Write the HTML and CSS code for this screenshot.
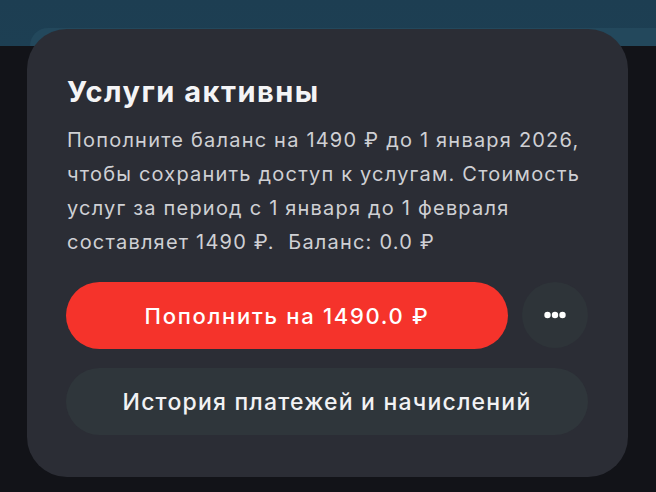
FILE: index.html
```html
<!DOCTYPE html>
<html lang="ru">
<head>
<meta charset="utf-8">
<title>Услуги активны</title>
<link rel="stylesheet" href="styles.css">
</head>
<body>
  <div class="backdrop">
    <div class="peek"></div>
  </div>
  <section class="sheet">
    <h1 class="sheet-title">Услуги активны</h1>
    <p class="sheet-text">Пополните баланс на 1490 ₽ до 1 января 2026,<br>чтобы сохранить доступ к услугам. Стоимость<br>услуг за период с 1 января до 1 февраля<br>составляет 1490 ₽.&nbsp; Баланс: 0.0 ₽</p>
    <div class="actions">
      <button class="btn btn-primary" type="button">Пополнить на 1490.0 ₽</button>
      <button class="btn-more" type="button" aria-label="Ещё">
        <svg width="22" height="8" viewBox="0 0 22 8"><circle cx="3.5" cy="4" r="3.2" fill="#fff"/><circle cx="11" cy="4" r="3.2" fill="#fff"/><circle cx="18.5" cy="4" r="3.2" fill="#fff"/></svg>
      </button>
    </div>
    <button class="btn btn-secondary" type="button">История платежей и начислений</button>
  </section>
</body>
</html>
```

FILE: styles.css
```css
* { box-sizing: border-box; }

html, body {
  margin: 0;
  height: 100%;
}

body {
  background: linear-gradient(to bottom, #1d3e52 0, #1d3f53 46px, #121318 46px);
  font-family: Inter, "Noto Sans", sans-serif;
  overflow: hidden;
}

/* page header behind the sheet */
.backdrop {
  height: 46px;
  padding-top: 28px;
  padding-left: 30px;
}

.peek {
  height: 18px;
  background: #23485c;
  border-top-left-radius: 30px;
}

.sheet {
  margin: -17px 0 0 27px;
  width: 601px;
  height: 448px;
  background: #2b2d35;
  border-radius: 40px;
  padding: 46px 40px 42px 39px;
  display: flex;
  flex-direction: column;
}

.sheet-title {
  margin: 0;
  font-size: 29px;
  line-height: 34px;
  font-weight: 700;
  color: #f4f4f6;
  letter-spacing: 1.5px;
  padding-left: 1px;
}

.sheet-text {
  margin: 14px 0 0;
  font-size: 20px;
  line-height: 34px;
  font-weight: 400;
  color: #cfd0d4;
  letter-spacing: 1.2px;
  padding-left: 1px;
  white-space: nowrap;
}

.actions {
  margin-top: 23px;
  display: flex;
  gap: 14px;
}

.btn {
  border: 0;
  height: 67px;
  border-radius: 34px;
  font-family: inherit;
  color: #fff;
  display: flex;
  align-items: center;
  justify-content: center;
  padding: 0;
}

.btn-primary {
  flex: 1;
  background: #f5332b;
  font-size: 22px;
  font-weight: 500;
  letter-spacing: 1.7px;
}

.btn-more {
  width: 66px;
  height: 66px;
  border: 0;
  border-radius: 50%;
  background: #2e3439;
  display: flex;
  align-items: center;
  justify-content: center;
  padding: 0;
}

.btn-secondary {
  margin-top: 19px;
  width: 100%;
  background: #2f363b;
  font-size: 23px;
  font-weight: 500;
  letter-spacing: 1.2px;
  color: #f2f2f4;
}
```
